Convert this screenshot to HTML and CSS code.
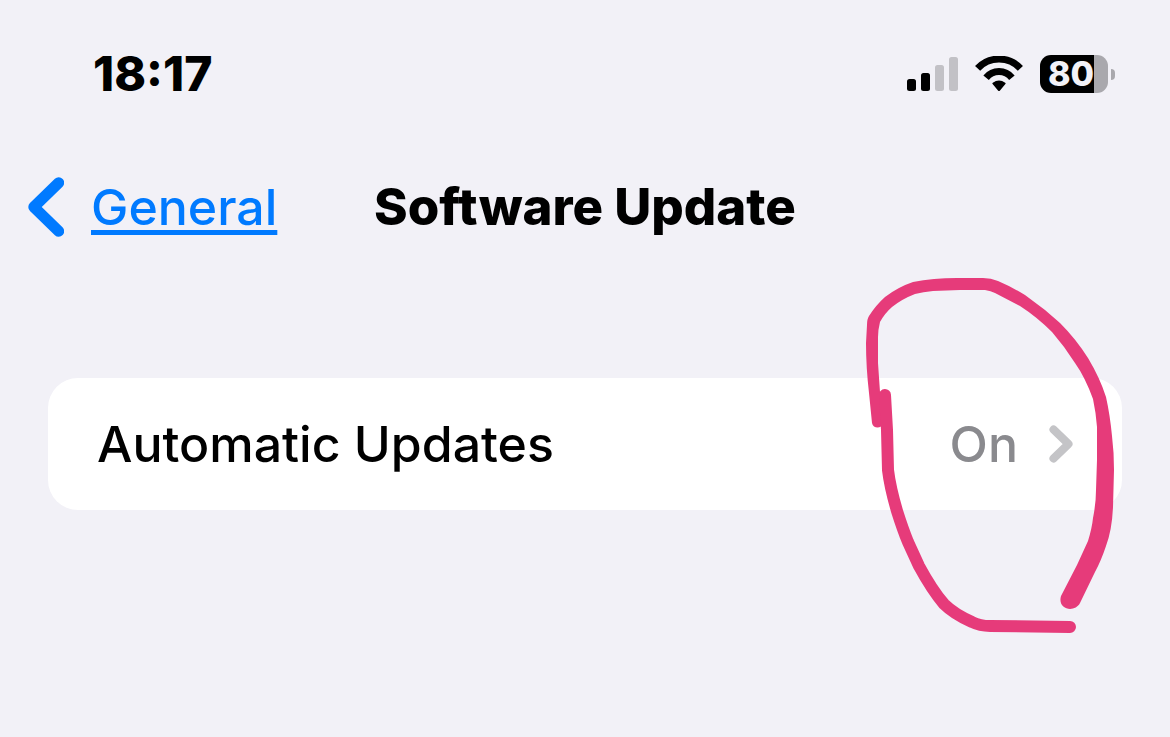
FILE: index.html
```html
<!DOCTYPE html>
<html lang="en">

<head>
  <meta charset="UTF-8">
  <meta name="viewport" content="width=device-width, initial-scale=1.0">
  <title>Software Update</title>
  <link rel="stylesheet" href="styles.css">
</head>

<body>
  <header class="status-bar">
    <time class="clock">18:17</time>
    <div class="status-icons">
      <svg class="signal" viewBox="0 0 51 34" role="img" aria-label="Signal: 2 of 4 bars">
        <rect x="0" y="22" width="9" height="12" rx="2.5" />
        <rect x="14" y="16" width="9" height="18" rx="2.5" />
        <rect class="weak" x="28" y="8" width="9" height="26" rx="2.5" />
        <rect class="weak" x="42" y="0" width="9" height="34" rx="2.5" />
      </svg>
      <svg class="wifi" viewBox="0 0 48 36" role="img" aria-label="Wi-Fi">
        <path class="wave" d="M2.6 12.4A29.2 29.2 0 0 1 45.4 12.4" />
        <path class="wave" d="M11.1 21.8A16.5 16.5 0 0 1 36.9 21.8" />
        <path d="M17.6 28.1Q16.8 27.3 17.8 26.7Q24 22.4 30.2 26.7Q31.2 27.3 30.4 28.1L25 34.4Q24 35.5 23 34.4Z" />
      </svg>
      <div class="battery">
        <span class="battery-level">80</span>
      </div>
    </div>
  </header>

  <nav class="nav-bar">
    <a class="back" href="#general">
      <svg class="back-icon" viewBox="0 0 36 60" aria-hidden="true">
        <path d="M30.7 5.8L5.8 30L30.7 54.2" />
      </svg>
      <span class="back-label">General</span>
    </a>
    <h1 class="title">Software Update</h1>
  </nav>

  <main class="settings">
    <a class="row" href="#automatic-updates">
      <span class="row-label">Automatic Updates</span>
      <span class="row-value">On</span>
      <svg class="row-icon" viewBox="0 0 24 38" aria-hidden="true">
        <path d="M4.5 4.5L19.5 19L4.5 33.5" />
      </svg>
    </a>

    <!-- hand-drawn marker around the value -->
    <svg class="marker" viewBox="860 270 262 370" aria-hidden="true">
      <path d="M872 423L869 393Q866 367 866 343L867 325Q867 319 869 316Q876 305 885 297Q898 287 913 282Q933 278 957 278L983 278Q991 278 998 281Q1012 287 1025 295L1045 310L1060 323Q1076 339 1088 358Q1100 378 1106 397Q1110 415 1112 436Q1114 452 1114 470L1113 507Q1112 530 1106 546Q1101 561 1095 572L1080 603C1075 613 1057 610 1061 596L1077 565L1088 541Q1092 528 1093 518Q1096 503 1096 490L1097 460L1097 427Q1096 413 1093 399Q1085 377 1075 363Q1065 347 1052 332Q1037 317 1020 306L995 293Q991 291 985 290L960 290L933 291Q923 292 915 294Q902 299 892 307Q885 313 880 322Q878 330 878 337L878 363L880 392L883 423C882 429 873 429 872 423Z" />
      <path class="stroke" d="M885 395L887 430L888 470Q890 487 897 511Q903 530 908 542L919 566Q932 590 944 604Q954 614 972 622Q980 626 990 626L1070 627" />
    </svg>
  </main>
</body>

</html>
```

FILE: styles.css
```css
* {
  margin: 0;
  padding: 0;
  box-sizing: border-box;
}

body {
  min-height: 100vh;
  background: #f2f1f7;
  color: #000;
  font-family: 'Inter', sans-serif;
  font-size: 50px;
  line-height: 60px;
}

a {
  color: inherit;
  text-decoration: none;
}

svg {
  display: block;
  flex: none;
}

/* Status bar */
.status-bar {
  display: flex;
  align-items: center;
  justify-content: space-between;
  padding: 44px 55px 0 93px;
}

.clock {
  font-size: 48px;
  font-weight: 800;
}

.status-icons {
  display: flex;
  align-items: center;
  gap: 17px;
}

.signal {
  width: 51px;
  height: 34px;
}

.signal .weak {
  fill: #c2c1c6;
}

.wifi {
  width: 48px;
  height: 36px;
}

.wave {
  fill: none;
  stroke: #000;
  stroke-width: 7;
}

.battery {
  position: relative;
  width: 68px;
  height: 38px;
  margin-right: 7px;
  padding-left: 8px;
  border-radius: 11px;
  background: linear-gradient(to right, #000 80%, #a9a8ad 80%);
}

/* battery tip */
.battery::after {
  content: "";
  position: absolute;
  top: 14px;
  right: -7px;
  width: 4px;
  height: 11px;
  border-radius: 0 6px 6px 0;
  background: #a9a8ad;
}

.battery-level {
  display: block;
  color: #f2f1f7;
  font-size: 34px;
  font-weight: 800;
  line-height: 38px;
}

/* Navigation */
.nav-bar {
  display: grid;
  grid-template-columns: 1fr auto 1fr;
  align-items: center;
  padding: 73px 28px 0;
}

.back {
  display: flex;
  align-items: center;
  gap: 27px;
  color: #007aff;
}

.back-icon {
  width: 36px;
  height: 60px;
  fill: none;
  stroke: #007aff;
  stroke-width: 11;
  stroke-linecap: round;
  stroke-linejoin: round;
}

.back-label {
  font-weight: 500;
  text-decoration: underline;
  text-decoration-thickness: 5px;
  text-underline-offset: 5px;
  text-decoration-skip-ink: none;
}

.title {
  font-size: 51px;
  font-weight: 800;
}

/* Settings list */
.settings {
  position: relative;
  margin: 141px 48px 0;
}

.row {
  display: flex;
  align-items: center;
  padding: 36px 49px;
  border-radius: 30px;
  background: #fff;
}

.row-label {
  flex: 1;
  font-weight: 500;
}

.row-value {
  margin-right: 31px;
  color: #8a8a8e;
  font-weight: 500;
}

.row-icon {
  width: 24px;
  height: 38px;
  fill: none;
  stroke: #c4c4c7;
  stroke-width: 8;
  stroke-linecap: round;
  stroke-linejoin: round;
}

.marker {
  position: absolute;
  top: -108px;
  right: 0;
  width: 262px;
  height: 370px;
  fill: #e63b7a;
  pointer-events: none;
}

.marker .stroke {
  fill: none;
  stroke: #e63b7a;
  stroke-width: 12;
  stroke-linecap: round;
  stroke-linejoin: round;
}
```
